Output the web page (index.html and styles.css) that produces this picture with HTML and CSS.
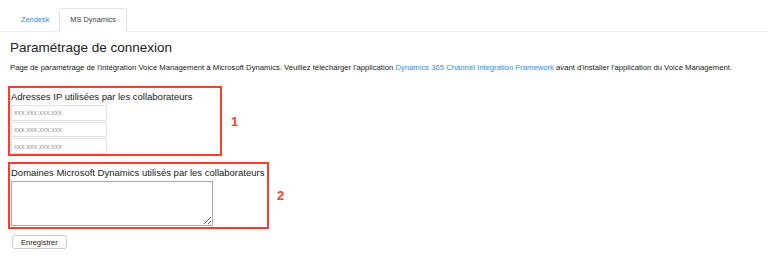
FILE: index.html
```html
<!DOCTYPE html>
<html lang="fr">
<head>
  <meta charset="UTF-8">
  <meta name="viewport" content="width=device-width, initial-scale=1.0">
  <title>Paramétrage de connexion</title>
  <link rel="stylesheet" href="styles.css">
</head>
<body>
  <ul class="onglets">
    <li class="onglet">Zendesk</li>
    <li class="onglet actif">MS Dynamics</li>
  </ul>

  <div class="contenu">
    <h1>Paramétrage de connexion</h1>
    <p class="intro">Page de paramétrage de l'intégration Voice Management à Microsoft Dynamics. Veuillez télécharger l'application <a href="#">Dynamics 365 Channel Integration Framework</a> avant d'installer l'application du Voice Management.</p>

    <div class="ligne">
      <div class="cadre cadre-ip">
        <label class="titre-champ">Adresses IP utilisées par les collaborateurs</label>
        <input type="text" class="ip" placeholder="xxx.xxx.xxx.xxx">
        <input type="text" class="ip" placeholder="xxx.xxx.xxx.xxx">
        <input type="text" class="ip" placeholder="xxx.xxx.xxx.xxx">
      </div>
      <span class="numero">1</span>
    </div>

    <div class="ligne">
      <div class="cadre cadre-domaines">
        <label class="titre-champ">Domaines Microsoft Dynamics utilisés par les collaborateurs</label>
        <textarea class="domaines"></textarea>
      </div>
      <span class="numero num2">2</span>
    </div>

    <button class="enregistrer">Enregistrer</button>
  </div>
</body>
</html>
```

FILE: styles.css
```css
body {
  margin: 0;
  background-color: #ffffff;
  font-family: "Liberation Sans", Arial, sans-serif;
  color: #333;
}
.onglets {
  list-style: none;
  margin: 8px 0 0 0;
  padding: 0 0 0 10px;
  display: flex;
  border-bottom: 1px solid #eeeeee;
}
.onglet {
  font-size: 7.4px;
  height: 22px;
  line-height: 22px;
  padding: 0 9px 0 10px;
  color: #2d8ceb;
  border: 1px solid transparent;
  border-bottom: none;
  margin-bottom: -1px;
}
.onglet.actif {
  color: #444;
  background-color: #ffffff;
  border-color: #e4e4e4;
  border-radius: 3px 3px 0 0;
  height: 23px;
  padding: 0 10px;
}
.contenu {
  padding: 0 8px;
}
h1 {
  font-weight: normal;
  font-size: 13.5px;
  line-height: 16px;
  color: #222;
  margin: 8px 0 0 2px;
}
.intro {
  font-size: 7.7px;
  line-height: 9px;
  color: #222;
  margin: 7px 0 14px 2px;
}
.intro a {
  color: #2d8ceb;
  text-decoration: none;
}
.ligne {
  display: flex;
  align-items: center;
  gap: 9px;
  margin-bottom: 6px;
}
.cadre {
  border: 2px solid #fa3c2d;
  padding: 3px 1px 0 1px;
  display: flex;
  flex-direction: column;
  align-items: flex-start;
}
.cadre-ip {
  width: 208px;
  height: 63px;
}
.cadre-domaines {
  width: 255px;
  height: 60px;
}
.titre-champ {
  font-size: 9.5px;
  line-height: 11px;
  color: #1a1a1a;
  margin: 0 0 3px 0;
}
.ip {
  width: 96px;
  height: 16px;
  box-sizing: border-box;
  border: 1px solid #e0e0e0;
  margin: 0;
  padding: 0 2px;
  font-size: 7px;
  font-family: "Liberation Sans", Arial, sans-serif;
}
.ip::placeholder {
  color: #9a9a9a;
}
.ip + .ip {
  margin-top: 1px;
}
.domaines {
  width: 202px;
  height: 45px;
  box-sizing: border-box;
  margin: 0;
  border: 1px solid #a9a9a9;
}
.numero {
  color: #fa3c2d;
  font-weight: bold;
  font-size: 13px;
}
.num2 {
  margin-left: -1px;
}
.enregistrer {
  display: block;
  margin: 3px 0 0 4px;
  height: 14px;
  padding: 0 8px;
  background-color: #ffffff;
  border: 1px solid #cccccc;
  border-radius: 3px;
  font-size: 7.5px;
  font-family: "Liberation Sans", Arial, sans-serif;
  color: #222;
}
```
